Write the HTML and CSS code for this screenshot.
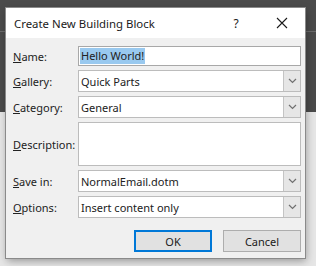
FILE: index.html
```html
<!DOCTYPE html>
<html lang="en">
<head>
    <meta charset="UTF-8">
    <title>Create New Building Block</title>
    <link rel="stylesheet" href="styles.css">
</head>
<body>

<div class="backdrop-line"></div>

<div class="dialog">
    <div class="title-bar">
        <span class="title">Create New Building Block</span>
        <span class="help">?</span>
        <span class="close">
            <svg width="12" height="12" viewBox="0 0 12 12"><path d="M1 1 L11 11 M11 1 L1 11" stroke="#1a1a1a" stroke-width="1.1" fill="none"/></svg>
        </span>
    </div>

    <div class="content">
        <div class="form">
            <label class="row-label"><u>N</u>ame:</label>
            <div class="field text-field"><span class="selected">Hello World!</span></div>

            <label class="row-label"><u>G</u>allery:</label>
            <div class="field combo"><span class="value">Quick Parts</span><span class="arrow"><svg width="9" height="6" viewBox="0 0 9 6"><path d="M1 1 L4.5 4.5 L8 1" stroke="#707070" stroke-width="1.2" fill="none"/></svg></span></div>

            <label class="row-label"><u>C</u>ategory:</label>
            <div class="field combo"><span class="value">General</span><span class="arrow"><svg width="9" height="6" viewBox="0 0 9 6"><path d="M1 1 L4.5 4.5 L8 1" stroke="#707070" stroke-width="1.2" fill="none"/></svg></span></div>

            <label class="row-label"><u>D</u>escription:</label>
            <div class="field textarea"></div>

            <label class="row-label"><u>S</u>ave in:</label>
            <div class="field combo"><span class="value">NormalEmail.dotm</span><span class="arrow"><svg width="9" height="6" viewBox="0 0 9 6"><path d="M1 1 L4.5 4.5 L8 1" stroke="#707070" stroke-width="1.2" fill="none"/></svg></span></div>

            <label class="row-label"><u>O</u>ptions:</label>
            <div class="field combo"><span class="value">Insert content only</span><span class="arrow"><svg width="9" height="6" viewBox="0 0 9 6"><path d="M1 1 L4.5 4.5 L8 1" stroke="#707070" stroke-width="1.2" fill="none"/></svg></span></div>
        </div>

        <div class="buttons">
            <button class="btn btn-default">OK</button>
            <button class="btn">Cancel</button>
        </div>
    </div>
</div>

</body>
</html>
```

FILE: styles.css
```css
body {
    margin: 0;
    width: 316px;
    height: 266px;
    overflow: hidden;
    font-family: "Noto Sans", "Open Sans", sans-serif;
    font-size: 11px;
    color: #222222;
    background: linear-gradient(#4b4b4b 0, #4b4b4b 112px, #e6e6e6 112px);
    position: relative;
    padding-top: 8px;
    box-sizing: border-box;
}
.backdrop-line {
    position: absolute;
    top: 31px;
    left: 0;
    right: 0;
    height: 1px;
    background: #6c6c6c;
}
.dialog {
    position: relative; /* sits above the backdrop line */
    margin-left: 6px;
    width: 299px;
    height: 250px;
    background: #f0f0f0;
    box-shadow: 0 0 0 1px #8a8a8a, 1px 3px 8px rgba(0, 0, 0, 0.35);
    display: flex;
    flex-direction: column;
}
.title-bar {
    height: 30px;
    background: #ffffff;
    display: flex;
    align-items: center;
}
.title {
    padding-left: 8px;
    font-size: 11.4px;
    color: #1a1a1a;
    flex: 1;
}
.help {
    width: 46px;
    text-align: center;
    font-size: 12px;
    color: #1a1a1a;
}
.close {
    width: 46px;
    display: flex;
    justify-content: center;
    align-items: center;
}
.content {
    padding: 8px 4px 0 7px;
}
.form {
    display: grid;
    grid-template-columns: 65px 223px;
    grid-template-rows: 20px 22px 22px 44px 22px 22px;
    row-gap: 4px;
    align-items: center;
}
.field {
    height: 100%;
    box-sizing: border-box;
    background: #ffffff;
    border: 1px solid #bcbcbc;
    display: flex;
    align-items: center;
}
.text-field {
    border-color: #a8a8a8;
    padding-left: 1px;
}
.selected {
    background: #99c9ef;
    padding: 0 1px;
    line-height: 16px;
}
.value {
    flex: 1;
    padding-left: 2px;
}
.arrow {
    width: 17px;
    height: 100%;
    box-sizing: border-box;
    background: #e6e6e6;
    border-left: 1px solid #c4c4c4;
    display: flex;
    align-items: center;
    justify-content: center;
}
.textarea {
    align-self: stretch;
}
.buttons {
    display: flex;
    justify-content: flex-end;
    gap: 11px;
    margin-top: 12px;
}
.btn {
    width: 78px;
    height: 22px;
    background: #e1e1e1;
    border: 1px solid #adadad;
    font-family: inherit;
    font-size: 11px;
    color: #1a1a1a;
    padding: 0;
}
.btn-default {
    border-color: #0078d7;
    box-shadow: inset 0 0 0 1px #0078d7;
}
```
